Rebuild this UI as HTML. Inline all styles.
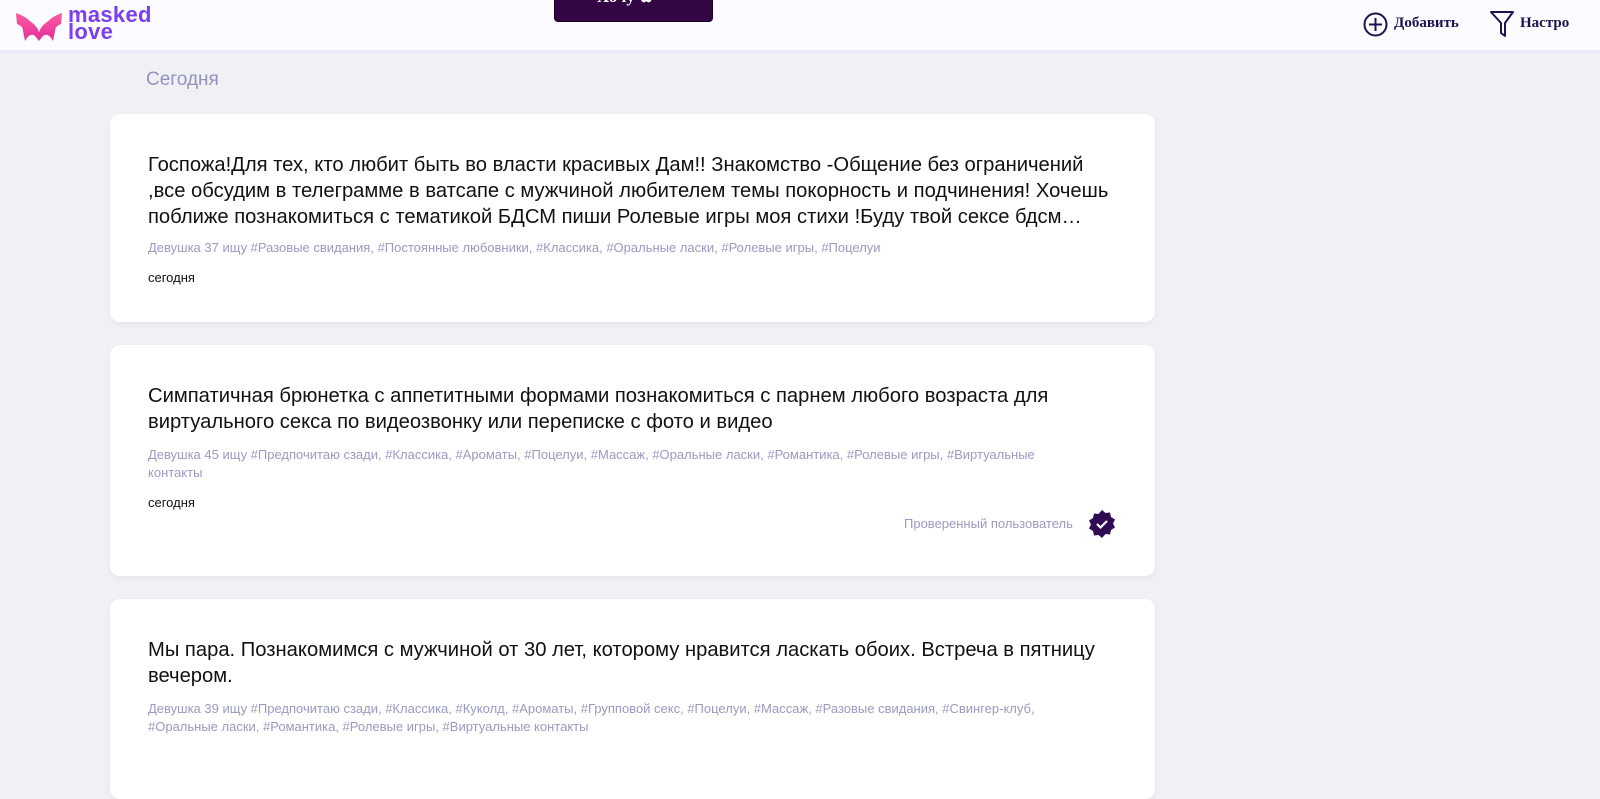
<html><head><style>
body{margin:0;width:1600px;height:760px;overflow:hidden;background:#f0f1f5;font-family:"Liberation Sans",sans-serif}
.hdr{position:absolute;left:0;top:0;width:1600px;height:50px;background:#fcfbff;border-bottom:4px solid #efe9fb}
.card{position:absolute;left:110px;width:1045px;background:#fff;border-radius:10px;box-shadow:0 2px 6px rgba(0,0,0,.05)}
.t{position:absolute;left:38px;width:1000px;font-size:20.2px;line-height:26px;color:#111;white-space:nowrap}
.g{position:absolute;left:38px;width:930px;font-size:13px;line-height:18px;color:#9a9ac2}
.d{position:absolute;left:38px;font-size:13px;color:#111}
</style></head><body>
<div class="hdr">
<svg style="position:absolute;left:15px;top:10px" width="48" height="32" viewBox="0 0 48 32"><defs><linearGradient id="a" x1="0" y1="0" x2="0" y2="1"><stop offset="0" stop-color="#ff5aa0"/><stop offset="1" stop-color="#e2309a"/></linearGradient></defs><path d="M1 3 Q10 6 16 12 Q22 16 24 22 Q26 16 32 12 Q38 6 47 3 L46 14 Q40 16 40 21 L38 31 Q33 22 28 26 L24 31 L20 26 Q15 22 10 31 L8 21 Q8 16 2 14 Z" fill="url(#a)"/></svg>
<div style="position:absolute;left:68px;top:6px;font-weight:bold;font-size:22px;line-height:17px;color:#7b3ff0;letter-spacing:.3px">masked<br>love</div>
<div style="position:absolute;left:554px;top:-10px;width:157px;height:30px;background:#330545;border-radius:0 0 4px 4px;border:1px solid #1a0226;overflow:hidden"><div style="position:absolute;left:42px;top:-4px;font:bold 17px 'Liberation Serif',serif;color:#fff">Хочу ✿</div></div>
<svg style="position:absolute;left:1363px;top:12px" width="25" height="25"><circle cx="12.5" cy="12.5" r="11" fill="none" stroke="#1e1350" stroke-width="2"/><path d="M12.5 6v13M6 12.5h13" stroke="#1e1350" stroke-width="2"/></svg>
<div style="position:absolute;left:1394px;top:15px;font:bold 15px 'Liberation Serif',serif;color:#1e1350">Добавить</div>
<svg style="position:absolute;left:1489px;top:10px" width="26" height="28"><path d="M2 2h22l-8 11v13l-4-3V13z" fill="none" stroke="#1e1350" stroke-width="2" stroke-linejoin="round"/></svg>
<div style="position:absolute;left:1520px;top:15px;font:bold 15px 'Liberation Serif',serif;color:#1e1350">Настро</div>
</div>
<div style="position:absolute;left:146px;top:69px;font-size:19px;color:#9394bd">Сегодня</div>
<div class="card" style="top:114px;height:208px">
<div class="t" style="top:38px">Госпожа!Для тех, кто любит быть во власти красивых Дам!! Знакомство -Общение без ограничений<br>,все обсудим в телеграмме в ватсапе с мужчиной любителем темы покорность и подчинения! Хочешь<br>поближе познакомиться с тематикой БДСМ пиши Ролевые игры моя стихи !Буду твой сексе бдсм…</div>
<div class="g" style="top:125px">Девушка 37 ищу #Разовые свидания, #Постоянные любовники, #Классика, #Оральные ласки, #Ролевые игры, #Поцелуи</div>
<div class="d" style="top:156px">сегодня</div>
</div>
<div class="card" style="top:345px;height:231px">
<div class="t" style="top:38px">Симпатичная брюнетка с аппетитными формами познакомиться с парнем любого возраста для<br>виртуального секса по видеозвонку или переписке с фото и видео</div>
<div class="g" style="top:101px">Девушка 45 ищу #Предпочитаю сзади, #Классика, #Ароматы, #Поцелуи, #Массаж, #Оральные ласки, #Романтика, #Ролевые игры, #Виртуальные контакты</div>
<div class="d" style="top:150px">сегодня</div>
<div style="position:absolute;left:794px;top:171px;font-size:13px;color:#9a9ac2">Проверенный пользователь</div>
<svg style="position:absolute;left:977px;top:164px" width="30" height="30" viewBox="0 0 30 30"><path d="M15 1l3.5 3 4.5-.5 1 4.5 4 2.5-2 4 2 4-4 2.5-1 4.5-4.5-.5L15 29l-3.5-3-4.5.5-1-4.5-4-2.5 2-4-2-4 4-2.5 1-4.5 4.5.5z" fill="#2e0b52"/><path d="M10 15l3.5 3.5L20 12" fill="none" stroke="#fff" stroke-width="2.2"/></svg>
</div>
<div class="card" style="top:599px;height:200px">
<div class="t" style="top:38px">Мы пара. Познакомимся с мужчиной от 30 лет, которому нравится ласкать обоих. Встреча в пятницу<br>вечером.</div>
<div class="g" style="top:101px">Девушка 39 ищу #Предпочитаю сзади, #Классика, #Куколд, #Ароматы, #Групповой секс, #Поцелуи, #Массаж, #Разовые свидания, #Свингер-клуб, #Оральные ласки, #Романтика, #Ролевые игры, #Виртуальные контакты</div>
</div>
</body></html>
